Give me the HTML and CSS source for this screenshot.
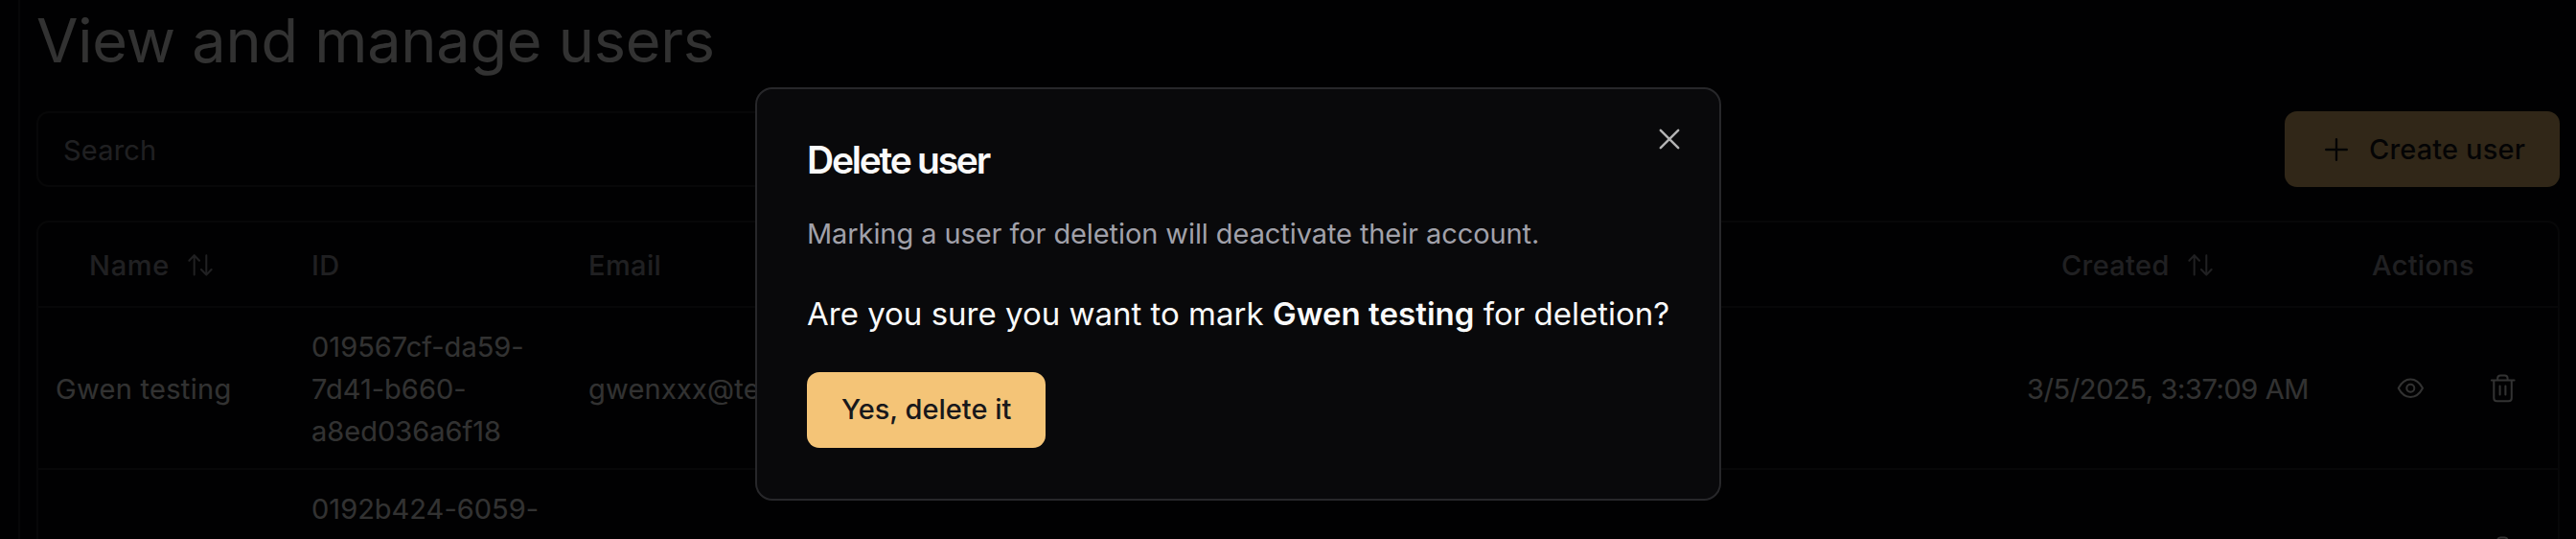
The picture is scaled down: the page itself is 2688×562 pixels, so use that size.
FILE: index.html
```
<!DOCTYPE html>
<html lang="en">
<head>
<meta charset="utf-8">
<title>View and manage users</title>
<link rel="stylesheet" href="styles.css">
</head>
<body>
<svg class="sprite" aria-hidden="true">
  <symbol id="sort" viewBox="0 0 26 24"><path d="M6.7 21.6V1.2M1.4 6.8 6.7 1.2l5.3 5.6M19.3 1.2v20.4M14 16l5.3 5.6 5.3-5.6"/></symbol>
  <symbol id="eye" viewBox="0 0 32 32"><path d="M2.7 14.7C6 8.5 10.5 5.5 15.3 5.5s9.4 3 12.7 9.2c-3.3 6.2-7.9 9.2-12.7 9.2S6 20.9 2.7 14.7Z"/><circle cx="15.3" cy="14.8" r="4"/></symbol>
  <symbol id="trash" viewBox="0 0 32 32"><path d="M3.9 6.5h23.7M10.2 6V4.6c0-2 1.2-3.1 3-3.1h4.4c1.8 0 3 1.1 3 3.1V6M6.3 6.5v18.4c0 2.2 1 3.3 3.2 3.3h12.1c2.2 0 3.2-1.1 3.2-3.3V6.5M12.6 12.6v8.8M18.4 12.6v8.8"/></symbol>
</svg>
<div class="app">
  <div class="rail"></div>
  <main class="main">
    <h1 class="title">View and manage users</h1>
    <div class="toolbar">
      <div class="search">Search</div>
      <button class="btn create">
        <svg class="plus" viewBox="0 0 24 24"><path d="M12 1.2v21.6M1.2 12h21.6"/></svg>
        <span>Create user</span>
      </button>
    </div>
    <div class="table">
      <div class="row head">
        <div class="cell name">Name<svg class="sort"><use href="#sort"/></svg></div>
        <div class="cell">ID</div>
        <div class="cell">Email</div>
        <div class="cell created">Created<svg class="sort"><use href="#sort"/></svg></div>
        <div class="cell actions">Actions</div>
      </div>
      <div class="row">
        <div class="cell name">Gwen testing</div>
        <div class="cell id"><span>019567cf-da59-</span><span>7d41-b660-</span><span>a8ed036a6f18</span></div>
        <div class="cell">gwenxxx@te</div>
        <div class="cell created">3/5/2025, 3:37:09 AM</div>
        <div class="cell actions"><svg class="icon"><use href="#eye"/></svg><svg class="icon"><use href="#trash"/></svg></div>
      </div>
      <div class="row">
        <div class="cell name"></div>
        <div class="cell id"><span>0192b424-6059-</span></div>
        <div class="cell"></div>
        <div class="cell created"></div>
        <div class="cell actions"><svg class="icon"><use href="#eye"/></svg><svg class="icon"><use href="#trash"/></svg></div>
      </div>
    </div>
  </main>
</div>
<div class="overlay"></div>
<section class="dialog" role="dialog">
  <svg class="close" viewBox="0 0 24 24"><path d="M2.8 2.8 21.2 21.2M21.2 2.8 2.8 21.2"/></svg>
  <h2 class="dialog-title">Delete user</h2>
  <p class="dialog-note">Marking a user for deletion will deactivate their account.</p>
  <p class="dialog-question">Are you sure you want to mark <strong>Gwen testing</strong> for deletion?</p>
  <button class="btn confirm">Yes, delete it</button>
</section>
</body>
</html>
```
FILE: styles.css
```
* { box-sizing: border-box; }
body {
  margin: 0;
  height: 562px;
  overflow: hidden;
  position: relative;
  background: #09090b;
  color: #fafafa;
  font: 400 29px/44px Inter, "Liberation Sans", sans-serif;
}
h1, h2, p { margin: 0; }
svg { display: block; flex: none; fill: none; stroke: currentColor; stroke-width: 2; stroke-linecap: round; stroke-linejoin: round; }
.sprite { display: none; }
.app { display: flex; height: 562px; overflow: hidden; }
.rail { flex: none; width: 21px; border-right: 2px solid #27272a; }
.main { flex: 1; padding: 2px 17px 0; }
.title { height: 114px; font-size: 63px; line-height: 80px; font-weight: 400; letter-spacing: -0.25px; }
.toolbar { display: flex; justify-content: space-between; height: 79px; margin-bottom: 35px; }
.search {
  width: 1000px;
  padding: 1px 26px 0;
  border: 2px solid #27272a;
  border-radius: 13px;
  line-height: 75px;
  letter-spacing: 0.2px;
  color: #a1a1aa;
}
.btn {
  display: flex;
  align-items: center;
  height: 79px;
  border: 0;
  border-radius: 13px;
  background: #f4c477;
  color: #18181b;
  font: 500 29px/44px Inter, "Liberation Sans", sans-serif;
}
.create { width: 287px; padding: 0 0 0 42px; gap: 22px; letter-spacing: 0.15px; }
.plus { width: 24px; height: 24px; stroke-width: 2.4; }
.table { height: 500px; border: 2px solid #27272a; border-radius: 13px 13px 0 0; }
.row {
  display: grid;
  grid-template-columns: 265px 289px 1fr 332px 241px;
  align-items: center;
  height: 169px;
  padding-top: 2px;
  border-bottom: 2px solid #27272a;
}
.head { height: 89px; font-weight: 500; color: #a1a1aa; }
.cell { display: flex; align-items: center; padding-left: 20px; letter-spacing: 0.22px; }
.cell.name { padding-left: 18px; letter-spacing: 0.3px; }
.cell.id { flex-direction: column; align-items: flex-start; height: 132px; letter-spacing: 0.02px; }
.cell.created { padding-left: 19px; letter-spacing: -0.4px; }
.cell.actions { padding-left: 72px; gap: 64px; }
.head .cell { padding-left: 20px; letter-spacing: 0.4px; }
.head .cell.name { padding-left: 53px; letter-spacing: 0.7px; }
.head .cell.created { padding-left: 55px; letter-spacing: 0.35px; }
.head .cell.actions { padding-left: 47px; letter-spacing: 0.3px; }
.sort { width: 26px; height: 24px; margin-left: 19px; }
.icon { width: 32px; height: 32px; }
.overlay { position: absolute; inset: 0; background: rgba(0, 0, 0, 0.8); }
.dialog {
  position: absolute;
  left: 788px;
  top: 91px;
  width: 1008px;
  height: 431px;
  padding: 54px 50px 0 52px;
  border: 2px solid #27272a;
  border-radius: 18px;
  background: #09090b;
}
.close { position: absolute; right: 40px; top: 40px; width: 24px; height: 24px; color: #b2b2b3; stroke-width: 2.5; }
.dialog-title { font-size: 39px; line-height: 40px; font-weight: 600; letter-spacing: -2.25px; }
.dialog-note { margin-top: 37px; line-height: 40px; letter-spacing: -0.09px; color: #a1a1aa; white-space: nowrap; }
.dialog-question { margin-top: 39px; font-size: 33px; line-height: 48px; letter-spacing: 0; white-space: nowrap; }
.dialog-question strong { font-weight: 600; letter-spacing: 0.05px; }
.confirm { width: 249px; margin-top: 36.5px; padding: 0 0 0 36px; letter-spacing: 0; }
```
